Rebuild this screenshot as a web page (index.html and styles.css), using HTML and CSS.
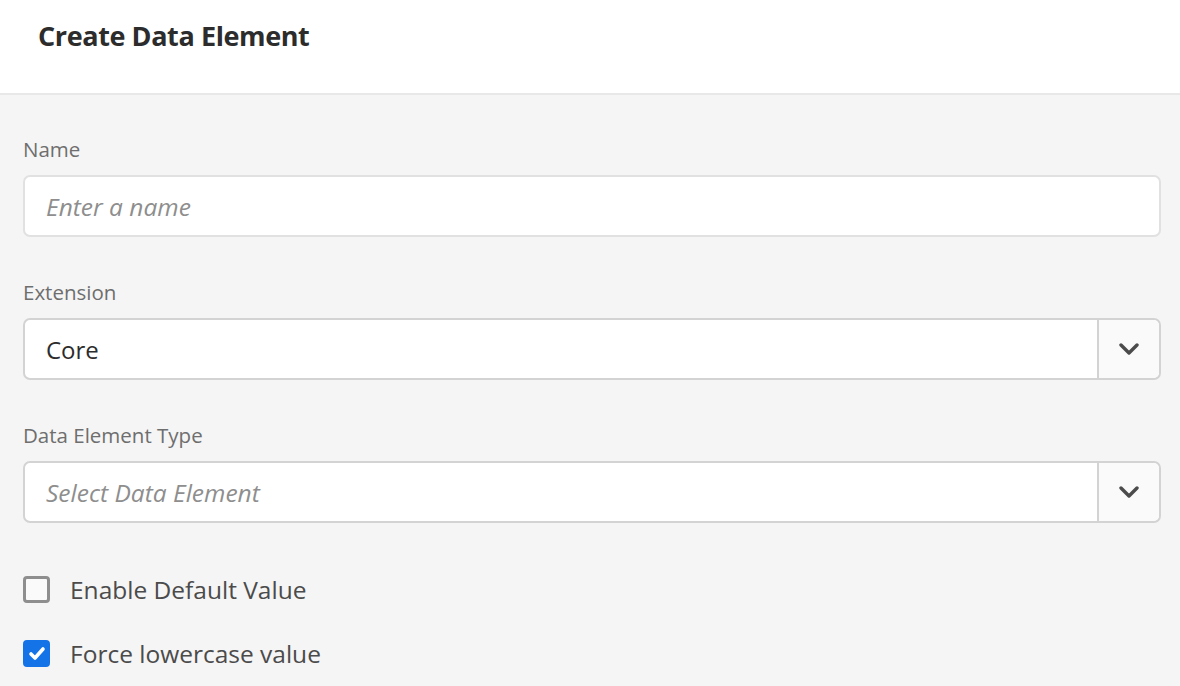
FILE: index.html
```html
<!DOCTYPE html>
<html>
<head>
<meta charset="utf-8">
<link rel="stylesheet" href="styles.css">
</head>
<body>
<div class="page">
  <header class="header">
    <h1 class="title">Create Data Element</h1>
  </header>
  <main class="form">
    <div class="field">
      <label class="label">Name</label>
      <div class="input"><span class="placeholder">Enter a name</span></div>
    </div>
    <div class="field">
      <label class="label">Extension</label>
      <div class="select">
        <div class="select-value">Core</div>
        <div class="select-btn">
          <svg width="20" height="12" viewBox="0 0 20 12"><polyline points="2,2 10,10 18,2" fill="none" stroke="#4b4b4b" stroke-width="3.4" stroke-linecap="round" stroke-linejoin="round"/></svg>
        </div>
      </div>
    </div>
    <div class="field">
      <label class="label">Data Element Type</label>
      <div class="select">
        <div class="select-value"><span class="placeholder">Select Data Element</span></div>
        <div class="select-btn">
          <svg width="20" height="12" viewBox="0 0 20 12"><polyline points="2,2 10,10 18,2" fill="none" stroke="#4b4b4b" stroke-width="3.4" stroke-linecap="round" stroke-linejoin="round"/></svg>
        </div>
      </div>
    </div>
    <div class="checks">
      <div class="check-row">
        <span class="box"></span>
        <span class="check-label">Enable Default Value</span>
      </div>
      <div class="check-row">
        <span class="box checked">
          <svg width="18" height="15" viewBox="0 0 18 15"><polyline points="3,8 7,12 15,3" fill="none" stroke="#fff" stroke-width="3.6" stroke-linecap="round" stroke-linejoin="round"/></svg>
        </span>
        <span class="check-label">Force lowercase value</span>
      </div>
    </div>
  </main>
</div>
</body>
</html>
```

FILE: styles.css
```css
html, body {
  margin: 0;
  padding: 0;
}
body {
  font-family: "Open Sans", Lato, sans-serif;
  background: #f5f5f5;
  color: #2c2c2c;
}
.page {
  width: 1180px;
  height: 686px;
  overflow: hidden;
}
.header {
  background: #ffffff;
  height: 95px;
  border-bottom: 2px solid #e8e8e8;
  box-sizing: border-box;
  padding-left: 38px;
  display: flex;
  align-items: flex-start;
}
.title {
  margin: 16px 0 0 0;
  font-size: 27px;
  font-weight: 700;
  line-height: 40px;
  color: #2c2c2c;
  letter-spacing: -0.4px;
}
.form {
  padding: 39px 19px 0 23px;
}
.field {
  display: flex;
  flex-direction: column;
  margin-bottom: 40px;
}
.label {
  font-size: 20.5px;
  line-height: 30px;
  color: #6e6e6e;
  margin-bottom: 11px;
}
.input, .select {
  height: 62px;
  box-sizing: border-box;
  border: 2px solid #e1e1e1;
  border-radius: 7px;
  background: #ffffff;
  display: flex;
  align-items: center;
}
.select {
  border-color: #d3d3d3;
}
.input {
  padding-left: 21px;
}
.placeholder {
  font-style: italic;
  color: #8e8e8e;
  font-size: 24.5px;
}
.select-value {
  flex: 1;
  padding-left: 21px;
  font-size: 24px;
  color: #2c2c2c;
  display: flex;
  align-items: center;
  height: 100%;
}
.select-btn {
  width: 60px;
  height: 100%;
  border-left: 2px solid #d3d3d3;
  background: #fafafa;
  border-radius: 0 6px 6px 0;
  display: flex;
  align-items: center;
  justify-content: center;
}
.checks {
  padding-top: 6px;
  display: flex;
  flex-direction: column;
  gap: 24px;
}
.check-row {
  display: flex;
  align-items: center;
  height: 40px;
}
.box {
  width: 27px;
  height: 27px;
  box-sizing: border-box;
  border: 3px solid #8e8e8e;
  border-radius: 4px;
  background: #fafafa;
  margin-right: 20px;
  display: flex;
  align-items: center;
  justify-content: center;
}
.box.checked {
  background: #1473e6;
  border-color: #1473e6;
}
.check-label {
  font-size: 24.5px;
  color: #4b4b4b;
}
```
